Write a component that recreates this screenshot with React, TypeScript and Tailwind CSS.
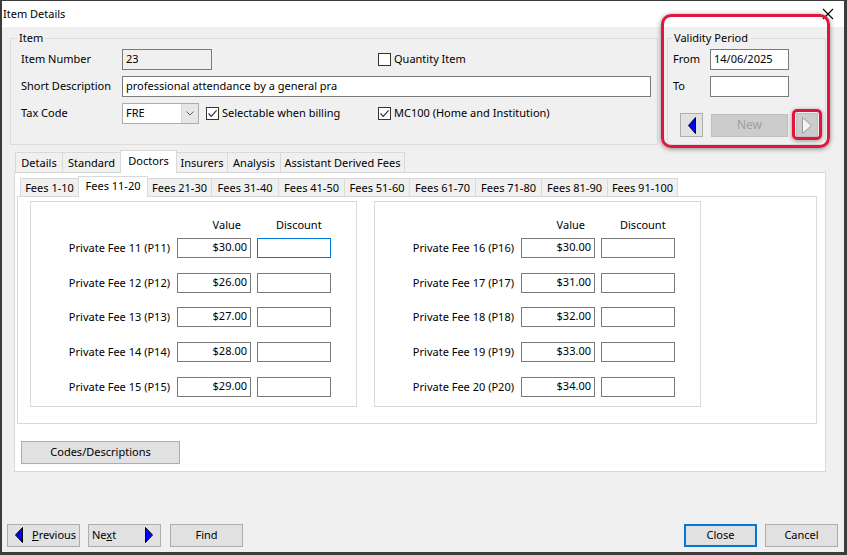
import React from "react";

const FONT = "font-['Noto_Sans',sans-serif]";

function Check({ checked }: { checked?: boolean }) {
  return (
    <span className="flex h-[13px] w-[13px] shrink-0 items-center justify-center border border-[#333333] bg-white">
      {checked && (
        <svg width="11" height="11" viewBox="0 0 11 11">
          <path d="M1.5 5.5 L4.2 8.3 L9.6 2.4" fill="none" stroke="#333333" strokeWidth="1.2" />
        </svg>
      )}
    </span>
  );
}

function Tri({ dir, color = "#0000ff", stroke = "#000000", w = 8, h = 16 }: { dir: "left" | "right"; color?: string; stroke?: string; w?: number; h?: number }) {
  const pts = dir === "left" ? `${w - 0.5},0.5 ${w - 0.5},${h - 0.5} 0.5,${h / 2}` : `0.5,0.5 0.5,${h - 0.5} ${w - 0.5},${h / 2}`;
  return (
    <svg width={w} height={h} viewBox={`0 0 ${w} ${h}`} className="shrink-0">
      <polygon points={pts} fill={color} stroke={stroke} strokeWidth="1" />
    </svg>
  );
}

function Tab({ label, w, sel, big }: { label: string; w: number; sel?: boolean; big?: boolean }) {
  const h = big ? (sel ? "h-[23px]" : "h-[20px]") : sel ? "h-[21px]" : "h-[18px]";
  return (
    <div
      style={{ width: w }}
      className={`-ml-px flex shrink-0 items-center justify-center whitespace-nowrap border border-b-0 border-[#d9d9d9] ${h} ${
        sel ? "relative z-10 -mb-px bg-white pb-[2px]" : "bg-[#f0f0f0]"
      }`}
    >
      {label}
    </div>
  );
}

function FeeBox({ rows, first }: { rows: { n: number; v: string }[]; first?: boolean }) {
  const gaps = ["mt-[5px]", "mt-[15px]", "mt-[14px]", "mt-[15px]", "mt-[15px]"];
  return (
    <div className="h-[206px] w-[327px] border border-[#d9d9d9] bg-white">
      <div className="mt-[15px] flex h-[16px] items-center">
        <div className="w-[146px]" />
        <div className="w-[74px] pr-[10px] text-right">Value</div>
        <div className="w-[80px] pl-[25px]">Discount</div>
      </div>
      {rows.map((r, i) => (
        <div key={r.n} className={`flex h-[20px] items-center ${gaps[i]}`}>
          <div className="w-[140px] pr-px text-right">
            Private Fee {r.n} (P{r.n})
          </div>
          <div className="ml-[6px] flex h-[20px] w-[74px] items-center justify-end border border-[#7a7a7a] bg-white pb-[2px] pr-[3px]">
            {r.v}
          </div>
          <div
            className={`ml-[6px] h-[20px] w-[74px] border bg-white ${
              first && i === 0 ? "border-[#0078d7]" : "border-[#7a7a7a]"
            }`}
          />
        </div>
      ))}
    </div>
  );
}

function Btn({
  children,
  w = 73,
  justify = "justify-center",
  border = "border border-[#adadad]",
  className = "",
}: {
  children: React.ReactNode;
  w?: number;
  justify?: string;
  border?: string;
  className?: string;
}) {
  return (
    <div style={{ width: w }} className={`flex h-[23px] shrink-0 items-center bg-[#e1e1e1] pb-px ${justify} ${border} ${className}`}>
      {children}
    </div>
  );
}

export default function App() {
  const left = [
    { n: 11, v: "$30.00" },
    { n: 12, v: "$26.00" },
    { n: 13, v: "$27.00" },
    { n: 14, v: "$28.00" },
    { n: 15, v: "$29.00" },
  ];
  const right = [
    { n: 16, v: "$30.00" },
    { n: 17, v: "$31.00" },
    { n: 18, v: "$32.00" },
    { n: 19, v: "$33.00" },
    { n: 20, v: "$34.00" },
  ];
  const feeTabs: [string, number][] = [
    ["Fees 1-10", 59],
    ["Fees 11-20", 70],
    ["Fees 21-30", 65],
    ["Fees 31-40", 68],
    ["Fees 41-50", 67],
    ["Fees 51-60", 66],
    ["Fees 61-70", 67],
    ["Fees 71-80", 67],
    ["Fees 81-90", 67],
    ["Fees 91-100", 71],
  ];

  return (
    <div
      className={`relative flex h-[555px] w-[847px] flex-col overflow-hidden border-t border-r-[3px] border-b-[3px] border-l-2 border-[#3c3c3c] bg-[#f0f0f0] text-[11px] leading-[16px] text-black ${FONT}`}
    >
      {/* title bar */}
      <div className="flex h-[26px] shrink-0 items-center justify-between bg-white pl-px pr-[10px]">
        <span className="pb-px">Item Details</span>
        <svg width="12" height="12" viewBox="0 0 12 12">
          <path d="M1 1 L11 11 M11 1 L1 11" stroke="#000000" strokeWidth="1.1" />
        </svg>
      </div>

      {/* top groups */}
      <div className="ml-[8px] mt-[3px] flex">
        <fieldset className="h-[115px] w-[648px] border border-[#dcdcdc] p-0">
          <legend className="ml-[6px] px-[2px] leading-[16px]">Item</legend>
          <div className="pl-[10px]">
            <div className="mt-[3px] flex h-[20px] items-center">
              <div className="w-[101px]">Item Number</div>
              <div className="flex h-[21px] w-[90px] items-center border border-[#7a7a7a] bg-[#f0f0f0] pl-[3px] pb-px">23</div>
              <div className="ml-[166px] flex items-center gap-[3px]">
                <Check />
                <span className="pb-px">Quantity Item</span>
              </div>
            </div>
            <div className="mt-[7px] flex h-[20px] items-center">
              <div className="w-[101px]">Short Description</div>
              <div className="flex h-[21px] w-[529px] items-center border border-[#7a7a7a] bg-white pl-[3px] pb-px">
                professional attendance by a general pra
              </div>
            </div>
            <div className="mt-[7px] flex h-[20px] items-center">
              <div className="w-[101px]">Tax Code</div>
              <div className="flex h-[21px] w-[77px] items-center border border-[#adadad] bg-white">
                <span className="flex-1 pl-[3px] pb-px">FRE</span>
                <span className="flex h-[19px] w-[17px] items-center justify-center border-l border-[#d9d9d9] bg-[#e6e6e6]">
                  <svg width="8" height="5" viewBox="0 0 8 5">
                    <path d="M0.5 0.5 L4 4 L7.5 0.5" fill="none" stroke="#606060" strokeWidth="1" />
                  </svg>
                </span>
              </div>
              <div className="ml-[7px] flex w-[172px] items-center gap-[3px]">
                <Check checked />
                <span className="pb-px">Selectable when billing</span>
              </div>
              <div className="flex items-center gap-[3px]">
                <Check checked />
                <span className="pb-px">MC100 (Home and Institution)</span>
              </div>
            </div>
          </div>
        </fieldset>

        <fieldset className="ml-[9px] h-[115px] w-[159px] border border-[#dcdcdc] p-0">
          <legend className="ml-[4px] px-[2px] leading-[16px]">Validity Period</legend>
          <div className="pl-[5px]">
            <div className="mt-[3px] flex h-[20px] items-center">
              <div className="w-[37px]">From</div>
              <div className="flex h-[21px] w-[79px] items-center border border-[#7a7a7a] bg-white pl-[3px] pb-px">14/06/2025</div>
            </div>
            <div className="mt-[7px] flex h-[20px] items-center">
              <div className="w-[37px]">To</div>
              <div className="h-[21px] w-[79px] border border-[#7a7a7a] bg-white" />
            </div>
            <div className="ml-[7px] mt-[17px] flex items-center">
              <div className="flex h-[24px] w-[23px] items-center justify-center border border-[#adadad] bg-[#e1e1e1]">
                <Tri dir="left" w={8} h={17} />
              </div>
              <div className="ml-[8px] flex h-[23px] w-[77px] items-center justify-center border border-[#bfbfbf] bg-[#cccccc] pb-px text-[12px] text-[#a0a0a0]">
                New
              </div>
              <div className="ml-[8px] flex h-[24px] w-[22px] items-center justify-center border border-[#bfbfbf] bg-[#cccccc]">
                <Tri dir="right" w={10} h={17} color="#f4f4f4" stroke="#9a9a9a" />
              </div>
            </div>
          </div>
        </fieldset>
      </div>

      {/* outer tabs */}
      <div className="ml-[12px] mt-[5px] w-[812px]">
        <div className="flex h-[22px] items-end pl-[2px]">
          <Tab big label="Details" w={48} />
          <Tab big label="Standard" w={59} />
          <Tab big sel label="Doctors" w={57} />
          <Tab big label="Insurers" w={52} />
          <Tab big label="Analysis" w={54} />
          <Tab big label="Assistant Derived Fees" w={125} />
        </div>
        <div className="h-[300px] border border-[#d9d9d9] bg-white">
          <div className="ml-[2px] mt-[3px] w-[800px]">
            <div className="flex h-[20px] items-end pl-[4px]">
              {feeTabs.map(([l, w], i) => (
                <Tab key={l} label={l} w={w} sel={i === 1} />
              ))}
            </div>
            <div className="flex h-[228px] gap-[17px] border border-[#d9d9d9] bg-white pl-[12px] pt-[4px]">
              <FeeBox rows={left} first />
              <FeeBox rows={right} />
            </div>
          </div>
          <Btn w={159} className="ml-[6px] mt-[17px]">
            Codes/Descriptions
          </Btn>
        </div>
      </div>

      {/* bottom buttons */}
      <div className="ml-[5px] mt-[52px] flex items-center">
        <Btn justify="justify-start" className="gap-[9px] pl-[7px]">
          <Tri dir="left" w={8} h={16} />
          <span>
            <span className="underline">P</span>revious
          </span>
        </Btn>
        <Btn justify="justify-between" className="ml-[8px] pl-[3px] pr-[7px]">
          <span>
            Ne<span className="underline">x</span>t
          </span>
          <Tri dir="right" w={8} h={16} />
        </Btn>
        <Btn className="ml-[9px]">Find</Btn>
        <div className="flex-1" />
        <Btn border="border-2 border-[#0078d7]">Close</Btn>
        <Btn className="ml-[8px] mr-[6px]">Cancel</Btn>
      </div>

      {/* red highlight annotations */}
      <div className="pointer-events-none absolute left-[659px] top-[13px] h-[134px] w-[169px] rounded-[10px] border-[3px] border-[#e2163a] shadow-[0_1px_5px_rgba(0,0,0,0.45)]" />
      <div className="pointer-events-none absolute left-[790px] top-[108px] h-[31px] w-[30px] rounded-[5px] border-[3px] border-[#e2163a] shadow-[0_1px_4px_rgba(0,0,0,0.4)]" />
    </div>
  );
}
